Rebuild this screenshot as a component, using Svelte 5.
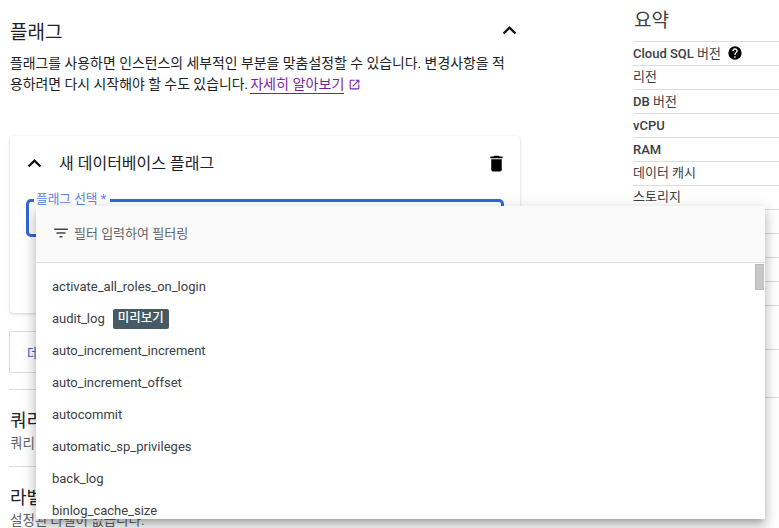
<script lang="ts">
  const summary = [
    { latin: 'Cloud SQL', label: ' 버전', help: true, mixed: true },
    { label: '리전', ko: true },
    { latin: 'DB', label: ' 버전', mixed: true },
    { latin: 'vCPU' },
    { latin: 'RAM' },
    { label: '데이터 캐시', ko: true },
    { label: '스토리지', ko: true },
    {},
    {},
    {},
    {},
    { tall: 'a' },
    { tall: 'b' },
    { tall: 'b' },
  ];

  const flags = [
    { name: 'activate_all_roles_on_login' },
    { name: 'audit_log', preview: true },
    { name: 'auto_increment_increment' },
    { name: 'auto_increment_offset' },
    { name: 'autocommit' },
    { name: 'automatic_sp_privileges' },
    { name: 'back_log' },
    { name: 'binlog_cache_size' },
  ];
</script>

<div class="page">
  <main class="main">
    <section class="flags">
      <div class="sec-head">
        <h2>플래그</h2>
        <svg class="chev" viewBox="0 0 24 24" width="27" height="27"><path d="M7.41 15.41 12 10.83l4.59 4.58L18 14l-6-6-6 6z" /></svg>
      </div>
      <p class="desc">
        플래그를 사용하면 인스턴스의 세부적인 부분을 맞춤설정할 수 있습니다. 변경사항을 적용하려면 다시 시작해야 할 수도 있습니다.<a href="#top">자세히 알아보기</a>
        <svg class="ext" viewBox="0 0 24 24" width="13" height="13"><path d="M19 19H5V5h7V3H5a2 2 0 0 0-2 2v14a2 2 0 0 0 2 2h14a2 2 0 0 0 2-2v-7h-2v7zM14 3v2h3.59l-9.83 9.83 1.41 1.41L19 6.41V10h2V3h-7z" /></svg>
      </p>

      <div class="card">
        <div class="card-head">
          <svg class="chev" viewBox="0 0 24 24" width="27" height="27"><path d="M7.41 15.41 12 10.83l4.59 4.58L18 14l-6-6-6 6z" /></svg>
          <span class="card-title">새 데이터베이스 플래그</span>
          <svg class="trash" viewBox="0 0 24 24" width="21" height="21"><path d="M6 19a2 2 0 0 0 2 2h8a2 2 0 0 0 2-2V7H6v12zM19 4h-3.5l-1-1h-5l-1 1H5v2h14V4z" /></svg>
        </div>
        <div class="field">
          <span class="field-label">플래그 선택 *</span>
        </div>
      </div>

      <div class="add-box"><span class="add-link">데이터베이스 플래그 추가</span></div>
    </section>

    <section class="block first">
      <h3>쿼리 인사이트</h3>
      <p>쿼리 인사이트가 사용 중지되었습니다.</p>
    </section>
    <section class="block">
      <h3>라벨</h3>
      <p>설정된 라벨이 없습니다.</p>
    </section>
  </main>

  <aside class="summary">
    <h2>요약</h2>
    <ul>
      {#each summary as row}
        <li class:ko={row.ko} class:mixed={row.mixed} class:tall-a={row.tall === 'a'} class:tall-b={row.tall === 'b'}>
          <span class="row-text">{#if row.latin}<b>{row.latin}</b>{/if}{row.label ?? ''}</span>
          {#if row.help}
            <svg viewBox="0 0 24 24" width="16" height="16"><path d="M12 2a10 10 0 1 0 0 20 10 10 0 0 0 0-20zm1 17h-2v-2h2v2zm2.07-7.75-.9.92C13.45 12.9 13 13.5 13 15h-2v-.5c0-1.1.45-2.1 1.17-2.83l1.24-1.26A2 2 0 0 0 14 9a2 2 0 1 0-4 0H8a4 4 0 1 1 8 0c0 .88-.36 1.68-.93 2.25z" /></svg>
          {/if}
        </li>
      {/each}
    </ul>
  </aside>

  <div class="dropdown">
    <div class="filter">
      <svg viewBox="0 0 24 24" width="18" height="18"><path d="M10 18h4v-2h-4v2zM3 6v2h18V6H3zm3 7h12v-2H6v2z" /></svg>
      <span>필터 입력하여 필터링</span>
    </div>
    <div class="options">
      {#each flags as flag}
        <div class="option">
          {flag.name}
          {#if flag.preview}<span class="chip">미리보기</span>{/if}
        </div>
      {/each}
      <div class="thumb"></div>
    </div>
  </div>
</div>

<style>
  :global(body) {
    margin: 0;
    background: #fff;
  }
  .page {
    position: relative;
    width: 779px;
    height: 528px;
    overflow: hidden;
    display: flex;
    font-family: Roboto, "Noto Sans CJK KR", "Liberation Sans", sans-serif;
    color: #202124;
  }

  /* left column */
  .main {
    width: 511px;
    padding-left: 10px;
    flex-shrink: 0;
  }
  .sec-head {
    display: flex;
    align-items: center;
    justify-content: space-between;
    height: 24px;
    margin-top: 18px;
  }
  .sec-head .chev {
    margin-right: -2px;
  }
  h2 {
    margin: 0;
    font-size: 19px;
    font-weight: 400;
    color: #202124;
  }
  .chev {
    fill: #111;
  }
  .desc {
    margin: 11px 0 0;
    width: 500px;
    font-size: 13.9px;
    line-height: 21px;
    color: #202124;
    word-break: break-all;
  }
  .desc a {
    margin-left: 2px;
    font-size: 14.1px;
    color: #7b1fa2;
    text-decoration: none;
    border-bottom: 1px solid #7b1fa2;
    padding-bottom: 1px;
  }
  .ext {
    fill: #7b1fa2;
    vertical-align: -2px;
  }
  .card {
    margin: 41px 1px 0 0;
    height: 177px;
    box-sizing: border-box;
    background: #fff;
    border-radius: 4px;
    box-shadow: 0 1px 3px rgba(60, 64, 67, 0.25);
    padding: 15px 12px 0 16px;
  }
  .card-head {
    display: flex;
    align-items: center;
    height: 24px;
  }
  .card-head .chev {
    margin-left: -5px;
  }
  .card-title {
    margin-left: 11px;
    padding-bottom: 2px;
    font-size: 16px;
    flex: 1;
  }
  .trash {
    fill: #000;
    margin-right: 1px;
  }
  .field {
    position: relative;
    margin-top: 24px;
    width: 478px;
    height: 38px;
    box-sizing: border-box;
    border: 3px solid #3367d6;
    border-radius: 5px;
  }
  .field-label {
    position: absolute;
    left: 5px;
    top: -11px;
    padding: 0 4px 0 2px;
    background: #fff;
    font-size: 12.7px;
    line-height: 16px;
    color: #5a86e0;
  }
  .add-box {
    margin-top: 18px;
    width: 510px;
    margin-left: -1px;
    height: 42px;
    box-sizing: border-box;
    border: 1px solid #dadce0;
    display: flex;
    align-items: center;
    padding-left: 17px;
  }
  .add-link {
    font-size: 13.5px;
    color: #3367d6;
  }
  .block {
    width: 510px;
    margin-left: -1px;
    height: 77px;
    box-sizing: border-box;
    border-top: 1px solid #dadce0;
    padding: 18px 0 0 1px;
  }
  .block.first {
    margin-top: 16px;
  }
  .block h3 {
    margin: 0;
    font-size: 18px;
    line-height: 26px;
    font-weight: 400;
  }
  .block p {
    margin: 0;
    font-size: 13.5px;
    line-height: 18px;
    color: #5f6368;
  }

  /* right column */
  .summary {
    margin-left: 112px;
    flex: 1;
    min-width: 0;
  }
  .summary h2 {
    margin: 10px 0 0 1px;
    line-height: 21px;
    height: 31px;
    color: #3c4043;
  }
  ul {
    margin: 0;
    padding: 0;
    list-style: none;
  }
  li {
    height: 24px;
    box-sizing: border-box;
    border-top: 1px solid #dadce0;
    display: flex;
    align-items: center;
    gap: 6px;
    font-size: 13px;
    color: #3c4043;
    white-space: nowrap;
  }
  li b {
    font-weight: 500;
  }
  li.mixed {
    padding-bottom: 2px;
  }
  li.ko {
    padding-bottom: 4px;
  }
  li svg {
    fill: #000;
  }
  li.tall-a {
    height: 44px;
  }
  li.tall-b {
    height: 48px;
  }

  /* flag dropdown */
  .dropdown {
    position: absolute;
    left: 36px;
    top: 206px;
    width: 729px;
    height: 313px;
    background: #fff;
    box-shadow: 0 5px 5px -3px rgba(0, 0, 0, 0.2), 0 8px 10px 1px rgba(0, 0, 0, 0.14), 0 3px 14px 2px rgba(0, 0, 0, 0.12);
    overflow: hidden;
  }
  .filter {
    height: 57px;
    box-sizing: border-box;
    background: #fafafa;
    border-bottom: 1px solid #dadce0;
    display: flex;
    align-items: center;
    gap: 4px;
    padding: 0 0 3px 16px;
    font-size: 13px;
    color: #5f6368;
  }
  .filter svg {
    fill: #444;
  }
  .options {
    position: relative;
    padding-top: 7px;
  }
  .option {
    height: 32px;
    display: flex;
    align-items: center;
    padding-left: 16px;
    font-size: 13px;
    color: #3c4043;
  }
  .chip {
    margin: 2px 0 0 8px;
    padding: 0 5px;
    height: 20px;
    line-height: 18px;
    border-radius: 2px;
    background: #455a64;
    color: #fff;
    font-size: 12.5px;
    font-weight: 500;
  }
  .thumb {
    position: absolute;
    right: 1px;
    top: 1px;
    width: 9px;
    height: 26px;
    box-sizing: border-box;
    background: #c8c8c8;
    border: 1px solid #bdbdbd;
  }
</style>
